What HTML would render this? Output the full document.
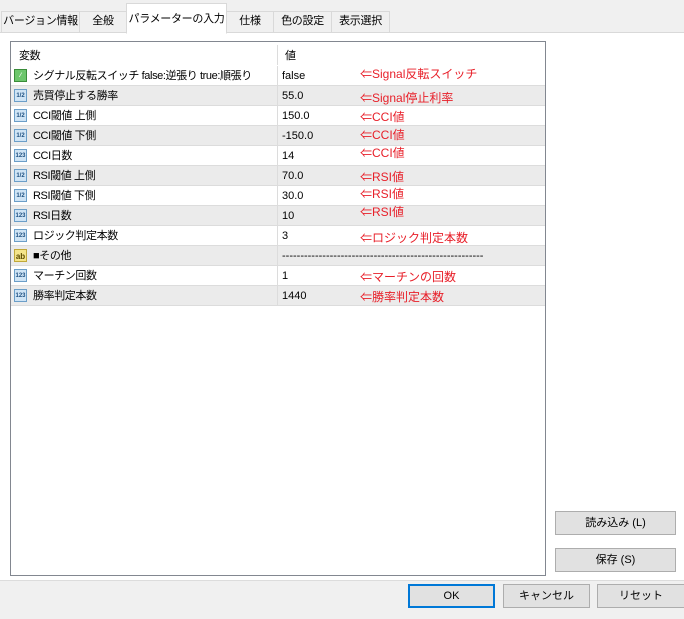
<!DOCTYPE html><html><head><meta charset="utf-8"><style>
body{margin:0;width:684px;height:618px;background:#fff;font-family:"Liberation Sans","Noto Sans CJK JP",sans-serif;font-size:11px;color:#000;position:relative;overflow:hidden;white-space:nowrap}
.a{position:absolute}
.tabbar{left:0;top:0;width:684px;height:32px;background:#f0f0f0;border-bottom:1px solid #d9d9d9}
.tab{position:absolute;top:11px;height:20px;border:1px solid #d9d9d9;border-bottom:none;background:#f0f0f0;text-align:center;line-height:19px;font-size:11px;letter-spacing:-0.3px}
.tab.act{top:3px;height:29px;background:#fff;line-height:30px;border-bottom:1px solid #fff}
.box{left:10px;top:41px;width:534px;height:533px;border:1px solid #828790;background:#fff}
.row{position:absolute;left:0;width:534px;height:19px;border-bottom:1px solid #dcdcdc;line-height:20px}
.row.g{background:#ebebeb}
.n{position:absolute;left:22px;letter-spacing:-0.4px}
.v{position:absolute;left:271px}
.sep{position:absolute;left:266px;top:0;width:1px;height:20px;background:#dcdcdc}
.ic{position:absolute;left:3px;top:3px;width:13px;height:13px;border:1px solid #6b9ec8;background:#cfe4f5;font-size:6px;line-height:13px;text-align:center;color:#1d4f80;font-weight:bold;box-sizing:border-box}
.ic.gr{background:#6cc66c;border-color:#3a8c3a;color:#fff}
.ic.y{background:#f5e58a;border-color:#c0a83a;color:#5a4a00;font-size:8px}
.r{position:absolute;left:360px;color:#e8202a;font-size:12px}
.btn{position:absolute;height:22px;border:1px solid #adadad;background:#e1e1e1;text-align:center;line-height:22px;font-size:11px}
.bot{left:0;top:580px;width:684px;height:38px;background:#f0f0f0;border-top:1px solid #dcdcdc}
</style></head><body>
<div class="a tabbar"></div>
<div class="tab" style="left:1px;width:77px">バージョン情報</div>
<div class="tab" style="left:79px;width:46px">全般</div>
<div class="tab act" style="left:126px;width:99px">パラメーターの入力</div>
<div class="tab" style="left:226px;width:46px">仕様</div>
<div class="tab" style="left:273px;width:57px">色の設定</div>
<div class="tab" style="left:331px;width:57px">表示選択</div>
<div class="a box">
<div class="row" style="top:3px;height:20px;border:none;line-height:22px"><span class="n" style="left:8px">変数</span><span class="v" style="left:274px">値</span><div class="sep" style="left:266px"></div></div>
<div class="row" style="top:24px"><div class="ic gr">⁄</div><span class="n">シグナル反転スイッチ false:逆張り true:順張り</span><div class="sep"></div><span class="v">false</span></div>
<div class="row g" style="top:44px"><div class="ic">1/2</div><span class="n">売買停止する勝率</span><div class="sep"></div><span class="v">55.0</span></div>
<div class="row" style="top:64px"><div class="ic">1/2</div><span class="n">CCI閾値 上側</span><div class="sep"></div><span class="v">150.0</span></div>
<div class="row g" style="top:84px"><div class="ic">1/2</div><span class="n">CCI閾値 下側</span><div class="sep"></div><span class="v">-150.0</span></div>
<div class="row" style="top:104px"><div class="ic">123</div><span class="n">CCI日数</span><div class="sep"></div><span class="v">14</span></div>
<div class="row g" style="top:124px"><div class="ic">1/2</div><span class="n">RSI閾値 上側</span><div class="sep"></div><span class="v">70.0</span></div>
<div class="row" style="top:144px"><div class="ic">1/2</div><span class="n">RSI閾値 下側</span><div class="sep"></div><span class="v">30.0</span></div>
<div class="row g" style="top:164px"><div class="ic">123</div><span class="n">RSI日数</span><div class="sep"></div><span class="v">10</span></div>
<div class="row" style="top:184px"><div class="ic">123</div><span class="n">ロジック判定本数</span><div class="sep"></div><span class="v">3</span></div>
<div class="row g" style="top:204px"><div class="ic y">ab</div><span class="n">■その他</span><div class="sep"></div><span class="v">-------------------------------------------------------</span></div>
<div class="row" style="top:224px"><div class="ic">123</div><span class="n">マーチン回数</span><div class="sep"></div><span class="v">1</span></div>
<div class="row g" style="top:244px"><div class="ic">123</div><span class="n">勝率判定本数</span><div class="sep"></div><span class="v">1440</span></div>
</div>
<div class="r" style="top:65px">⇐Signal反転スイッチ</div>
<div class="r" style="top:89px">⇐Signal停止利率</div>
<div class="r" style="top:108px">⇐CCI値</div>
<div class="r" style="top:126px">⇐CCI値</div>
<div class="r" style="top:144px">⇐CCI値</div>
<div class="r" style="top:168px">⇐RSI値</div>
<div class="r" style="top:185px">⇐RSI値</div>
<div class="r" style="top:203px">⇐RSI値</div>
<div class="r" style="top:229px">⇐ロジック判定本数</div>
<div class="r" style="top:268px">⇐マーチンの回数</div>
<div class="r" style="top:288px">⇐勝率判定本数</div>
<div class="btn" style="left:555px;top:511px;width:119px">読み込み (L)</div>
<div class="btn" style="left:555px;top:548px;width:119px">保存 (S)</div>
<div class="a bot"></div>
<div class="btn" style="left:408px;top:584px;width:83px;border:2px solid #0078d7;height:20px;line-height:20px">OK</div>
<div class="btn" style="left:503px;top:584px;width:85px">キャンセル</div>
<div class="btn" style="left:597px;top:584px;width:86px">リセット</div>
</body></html>
